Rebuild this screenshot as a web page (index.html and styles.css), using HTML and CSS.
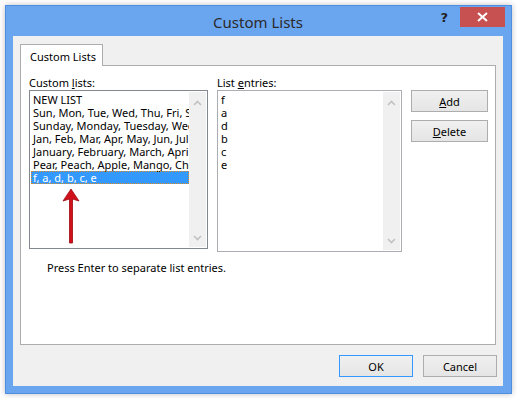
FILE: index.html
```html
<!DOCTYPE html>
<html lang="en">
<head>
    <meta charset="UTF-8">
    <title>Custom Lists</title>
    <link rel="stylesheet" href="styles.css">
</head>
<body>
    <div class="window">
        <div class="titlebar">
            <span class="title">Custom Lists</span>
            <span class="help">?</span>
            <span class="close">
                <svg width="11" height="10" viewBox="0 0 11 10"><path d="M1 1 L10 9 M10 1 L1 9" stroke="#fff" stroke-width="2"/></svg>
            </span>
        </div>

        <div class="client">
            <div class="tabs">
                <div class="tab">Custom Lists</div>
            </div>

            <div class="panel">
                <div class="columns">
                    <div class="col-left">
                        <div class="label">Custom <u>l</u>ists:</div>
                        <div class="listbox listbox-left">
                            <div class="rows">
                                <div class="row">NEW LIST</div>
                                <div class="row">Sun, Mon, Tue, Wed, Thu, Fri, Sat</div>
                                <div class="row">Sunday, Monday, Tuesday, Wednesday</div>
                                <div class="row">Jan, Feb, Mar, Apr, May, Jun, Jul</div>
                                <div class="row">January, February, March, April</div>
                                <div class="row">Pear, Peach, Apple, Mango, Cherry</div>
                                <div class="row selected">f, a, d, b, c, e</div>
                            </div>
                            <div class="scrollbar">
                                <svg width="9" height="6" viewBox="0 0 9 6"><path d="M1 5 L4.5 1.5 L8 5" fill="none" stroke="#c2c2c2" stroke-width="1.6"/></svg>
                                <svg width="9" height="6" viewBox="0 0 9 6"><path d="M1 1 L4.5 4.5 L8 1" fill="none" stroke="#c2c2c2" stroke-width="1.6"/></svg>
                            </div>
                            <svg class="arrow" width="20" height="56" viewBox="0 0 20 56">
                                <path d="M10 1 L18 13 L11.5 11 L11.5 55 L8.5 55 L8.5 11 L2 13 Z" fill="#d0101a" stroke="#9c0a10" stroke-width="0.8"/>
                            </svg>
                        </div>
                    </div>

                    <div class="col-right">
                        <div class="label">List <u>e</u>ntries:</div>
                        <div class="listbox listbox-right">
                            <div class="rows">
                                <div class="row">f</div>
                                <div class="row">a</div>
                                <div class="row">d</div>
                                <div class="row">b</div>
                                <div class="row">c</div>
                                <div class="row">e</div>
                            </div>
                            <div class="scrollbar">
                                <svg width="9" height="6" viewBox="0 0 9 6"><path d="M1 5 L4.5 1.5 L8 5" fill="none" stroke="#c2c2c2" stroke-width="1.6"/></svg>
                                <svg width="9" height="6" viewBox="0 0 9 6"><path d="M1 1 L4.5 4.5 L8 1" fill="none" stroke="#c2c2c2" stroke-width="1.6"/></svg>
                            </div>
                        </div>
                    </div>

                    <div class="col-buttons">
                        <button class="btn"><u>A</u>dd</button>
                        <button class="btn"><u>D</u>elete</button>
                    </div>
                </div>

                <p class="hint">Press Enter to separate list entries.</p>
            </div>

            <div class="footer">
                <button class="btn btn-footer btn-default">OK</button>
                <button class="btn btn-footer">Cancel</button>
            </div>
        </div>
    </div>
</body>
</html>
```

FILE: styles.css
```css
* {
    margin: 0;
    padding: 0;
    box-sizing: border-box;
}

body {
    font-family: "Noto Sans", "Open Sans", sans-serif;
    font-size: 11px;
    color: #000;
    background: #fff;
    width: 517px;
    height: 398px;
    overflow: hidden;
}

.window {
    margin: 5px 0 0 5px;
    width: 507px;
    height: 389px;
    background: #6aa5f0;
    border: 1px solid #4d8ee0;
    box-shadow: 0 0 6px rgba(0, 0, 0, 0.25);
    display: flex;
    flex-direction: column;
    padding: 0 8px 7px 7px;
}

.titlebar {
    height: 30px;
    position: relative;
    display: flex;
    align-items: center;
    justify-content: center;
}

.title {
    font-size: 15px;
    color: #2b2b2b;
    margin-top: 2px;
}

.help {
    position: absolute;
    right: 55px;
    top: 4px;
    font-family: "DejaVu Sans", sans-serif;
    font-weight: bold;
    font-size: 13px;
    color: #222;
}

.close {
    position: absolute;
    right: -2px;
    top: 1px;
    width: 45px;
    height: 20px;
    background: #c75050;
    display: flex;
    align-items: center;
    justify-content: center;
}

.client {
    flex: 1;
    background: #f0f0f0;
    padding: 8px 7px 0 7px;
    display: flex;
    flex-direction: column;
}

.tabs {
    display: flex;
    height: 21px;
    position: relative;
    z-index: 1;
}

.tab {
    width: 83px;
    height: 22px;
    background: #fff;
    border: 1px solid #adadad;
    border-bottom: none;
    padding: 4px 0 0 9px;
}

.panel {
    height: 280px;
    background: #fff;
    border: 1px solid #adadad;
    padding: 10px 7px 0 8px;
}

.columns {
    display: flex;
    gap: 9px;
}

.label {
    height: 14px;
    line-height: 14px;
}

.col-left {
    width: 179px;
}

.col-right {
    width: 185px;
}

.listbox {
    border: 1px solid #828790;
    background: #fff;
    display: flex;
    position: relative;
}

.listbox-left {
    height: 159px;
}

.listbox-right {
    height: 162px;
    border-color: #abadb3;
}

.rows {
    flex: 1;
    padding: 2px 0 0 1px;
    overflow: hidden;
    white-space: nowrap;
}

.row {
    height: 13px;
    line-height: 13px;
    padding-left: 2px;
}

.selected {
    background: #3399ff;
    color: #fff;
    outline: 1px dotted #d98a2a;
    outline-offset: -1px;
}

.scrollbar {
    width: 17px;
    margin: 1px 1px 1px 0;
    background: #f0f0f0;
    display: flex;
    flex-direction: column;
    justify-content: space-between;
    align-items: center;
    padding: 8px 0 6px;
}

.arrow {
    position: absolute;
    left: 31px;
    top: 97px;
}

.col-buttons {
    padding-top: 14px;
    display: flex;
    flex-direction: column;
    gap: 8px;
}

.btn {
    font-family: inherit;
    font-size: 11px;
    width: 77px;
    height: 22px;
    border: 1px solid #adadad;
    background: linear-gradient(#f0f0f0, #e5e5e5);
    color: #000;
}

.hint {
    margin: 9px 0 0 18px;
    line-height: 14px;
}

.footer {
    display: flex;
    justify-content: flex-end;
    gap: 10px;
    padding: 10px 0 0;
    margin-right: -1px;
}

.btn-footer {
    width: 74px;
    height: 22px;
}

.btn-default {
    border-color: #3399ff;
}
```
